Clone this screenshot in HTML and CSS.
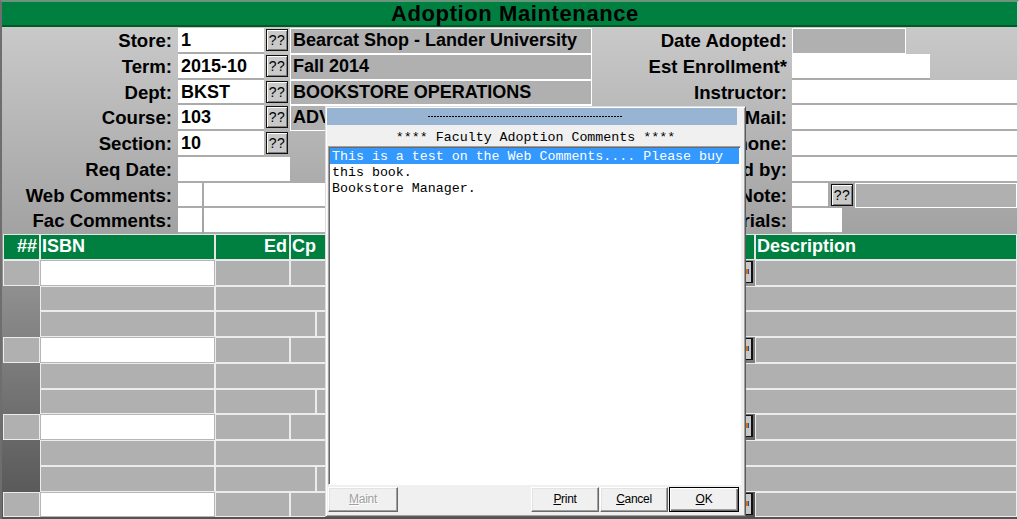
FILE: index.html
```html
<!DOCTYPE html>
<html>
<head>
<meta charset="utf-8">
<title>Adoption Maintenance</title>
<link rel="stylesheet" href="styles.css">
</head>
<body>
<div class="app">
  <div class="title">Adoption Maintenance</div>
  <div class="form">
    <div class="fcol left">
      <div class="frow"><span class="lbl">Store:</span><span class="inp w86">1</span><span class="qq">??</span><span class="desc">Bearcat Shop - Lander University</span></div>
      <div class="frow"><span class="lbl">Term:</span><span class="inp w86">2015-10</span><span class="qq">??</span><span class="desc">Fall 2014</span></div>
      <div class="frow"><span class="lbl">Dept:</span><span class="inp w86">BKST</span><span class="qq">??</span><span class="desc">BOOKSTORE OPERATIONS</span></div>
      <div class="frow"><span class="lbl">Course:</span><span class="inp w86">103</span><span class="qq">??</span><span class="desc">ADV</span></div>
      <div class="frow"><span class="lbl">Section:</span><span class="inp w86">10</span><span class="qq">??</span></div>
      <div class="frow"><span class="lbl">Req Date:</span><span class="inp w112"></span></div>
      <div class="frow"><span class="lbl">Web Comments:</span><span class="inp w24"></span><span class="inp wide"></span></div>
      <div class="frow"><span class="lbl">Fac Comments:</span><span class="inp w24"></span><span class="inp wide"></span></div>
    </div>
    <div class="fcol right">
      <div class="frow"><span class="lbl">Date Adopted:</span><span class="gfield w114"></span></div>
      <div class="frow"><span class="lbl">Est Enrollment*</span><span class="inp w138"></span></div>
      <div class="frow"><span class="lbl">Instructor:</span><span class="inp grow"></span></div>
      <div class="frow"><span class="lbl">Mail:</span><span class="inp grow"></span></div>
      <div class="frow"><span class="lbl">Phone:</span><span class="inp grow"></span></div>
      <div class="frow"><span class="lbl">Adopted by:</span><span class="inp grow"></span></div>
      <div class="frow"><span class="lbl">Note:</span><span class="inp w36"></span><span class="qq qq-note">??</span><span class="gfield grow"></span></div>
      <div class="frow"><span class="lbl">Materials:</span><span class="inp w50"></span></div>
    </div>
  </div>

  <div class="grid">
    <div class="h col1 right-t">##</div>
    <div class="h col2">ISBN</div>
    <div class="h col3 right-t">Ed</div>
    <div class="h col45">Cp</div>
    <div class="h col6"></div>
    <div class="h col7">Description</div>

    <div class="c col1"></div><div class="c w col2"></div><div class="c col3"></div><div class="c col45"></div><div class="col6 mini-cell"><span class="mini"></span></div><div class="c col7"></div>
    <div class="col1 dark"></div><div class="c col2"></div><div class="c col3to7"></div>
    <div class="c col2"></div><div class="c col34"></div><div class="c col5to7"></div>

    <div class="c col1"></div><div class="c w col2"></div><div class="c col3"></div><div class="c col45"></div><div class="col6 mini-cell"><span class="mini"></span></div><div class="c col7"></div>
    <div class="col1 dark"></div><div class="c col2"></div><div class="c col3to7"></div>
    <div class="c col2"></div><div class="c col34"></div><div class="c col5to7"></div>

    <div class="c col1"></div><div class="c w col2"></div><div class="c col3"></div><div class="c col45"></div><div class="col6 mini-cell"><span class="mini"></span></div><div class="c col7"></div>
    <div class="col1 dark"></div><div class="c col2"></div><div class="c col3to7"></div>
    <div class="c col2"></div><div class="c col34"></div><div class="c col5to7"></div>

    <div class="c col1"></div><div class="c w col2"></div><div class="c col3"></div><div class="c col45"></div><div class="col6 mini-cell"><span class="mini"></span></div><div class="c col7"></div>
  </div>

  <div class="modal">
    <div class="mhead"><div class="dots"></div></div>
    <div class="msub">**** Faculty Adoption Comments ****</div>
    <div class="mtext">
      <div class="ln sel">This is a test on the Web Comments.... Please buy</div>
      <div class="ln">this book.</div>
      <div class="ln">Bookstore Manager.</div>
    </div>
    <div class="mbtns">
      <span class="btn maint"><u>M</u>aint</span>
      <span class="spacer"></span>
      <span class="btn print"><u>P</u>rint</span>
      <span class="btn cancel"><u>C</u>ancel</span>
      <span class="btn ok"><u>O</u>K</span>
    </div>
  </div>
</div>
</body>
</html>
```

FILE: styles.css
```css
* { box-sizing: border-box; margin: 0; padding: 0; }
html, body { width: 1019px; height: 519px; overflow: hidden; }
body { font-family: "Liberation Sans", Arial, sans-serif; background: #c8c8c8; color: #000; }

.app {
  position: relative;
  width: 1019px;
  height: 519px;
  border-top: 2px solid #6a957c;
  border-left: 2px solid #6e6e6e;
  border-right: 2px solid #d2d2d2;
  overflow: hidden;
  display: flex;
  flex-direction: column;
}

.title {
  flex: none;
  height: 25px;
  background: #008040;
  border-bottom: 2px solid #005a22;
  text-align: center;
  padding-left: 11px;
  font-weight: bold;
  font-size: 22px;
  letter-spacing: 0.6px;
  line-height: 24px;
}

.form {
  flex: none;
  display: flex;
  padding-top: 1px;
  background: linear-gradient(#c9c9c9, #a2a2a2);
}
.fcol { display: flex; flex-direction: column; }
.left { width: 593px; }
.right { flex: 1; }
.frow { height: 25.75px; display: flex; align-items: stretch; }

.lbl {
  flex: none;
  font-weight: bold;
  font-size: 18.6px;
  line-height: 25.75px;
  text-align: right;
  white-space: nowrap;
}
.left .lbl { width: 170px; margin-right: 6px; }
.right .lbl { width: 192px; margin-right: 5px; }

.inp {
  flex: none;
  background: #fff;
  border-bottom: 2px solid #ababab;
  font-weight: bold;
  font-size: 18px;
  line-height: 24px;
  padding-left: 3px;
  white-space: nowrap;
}
.w86 { width: 86px; }
.w112 { width: 112px; }
.w24 { width: 24px; margin-right: 2px; }
.wide { width: 140px; }
.w138 { width: 138px; }
.w36 { width: 36px; }
.w50 { width: 50px; }
.grow { flex: 1; }

.qq {
  flex: none;
  width: 22px;
  height: 22px;
  margin: 1px 2px 0 2px;
  background: #c9c9c9;
  border: 1px solid #111;
  box-shadow: inset 1px 1px #fff, inset -1px -1px #808080;
  font-size: 14px;
  line-height: 20px;
  text-align: center;
  letter-spacing: 0.5px;
}
.qq-note { margin-left: 3px; }

.desc {
  flex: none;
  width: 302px;
  background: #b0b0b0;
  border: 1px solid #fff;
  font-weight: bold;
  font-size: 18px;
  line-height: 23.5px;
  padding-left: 2px;
  white-space: nowrap;
  overflow: hidden;
}

.gfield {
  background: #b0b0b0;
  border: 1px solid #fff;
}
.w114 { flex: none; width: 114px; }

/* table grid */
.grid {
  flex: 1;
  display: grid;
  grid-template-columns: 37px 175px 75px 26px 1fr 10px 262px;
  grid-auto-rows: 25.75px;
  padding-left: 1px;
  background: linear-gradient(#9d9d9d, #535353);
  overflow: hidden;
}
.h {
  background: #008040;
  color: #fff;
  font-weight: bold;
  font-size: 18px;
  line-height: 23.5px;
  border: 1px solid #e6e6e6;
  white-space: nowrap;
  overflow: hidden;
  padding-left: 1px;
}
.right-t { text-align: right; padding-right: 2px; }
.c { background: #b0b0b0; border: 1px solid #ececec; }
.c.w { background: #fff; border-color: #b6b6b6; }

.col1 { grid-column: 1; }
.col2 { grid-column: 2; }
.col3 { grid-column: 3; }
.col45 { grid-column: 4 / 6; }
.col6 { grid-column: 6; }
.col7 { grid-column: 7; }
.col3to7 { grid-column: 3 / 8; }
.col34 { grid-column: 3 / 5; }
.col5to7 { grid-column: 5 / 8; }
.dark { grid-row: span 2; }

.mini-cell { display: flex; align-items: flex-start; }
.mini {
  display: block;
  width: 8px;
  height: 22px;
  margin-top: 1px;
  background: #c8c8c8;
  border: 1px solid #111;
  border-right-width: 2px;
  position: relative;
}
.mini::before {
  content: "";
  position: absolute;
  left: 0;
  top: 7px;
  width: 2px;
  height: 5px;
  background: #d07020;
  box-shadow: 1px 0 #2050a0;
}

/* modal */
.modal {
  position: absolute;
  left: 323px;
  top: 104px;
  width: 421px;
  height: 411px;
  background: #f0f0f0;
  border: 1px solid;
  border-color: #dcdcdc #5c5c5c #5c5c5c #dcdcdc;
  box-shadow: inset 1px 1px #fff, inset -1px -1px #a0a0a0;
  padding: 1px;
  display: flex;
  flex-direction: column;
}
.mhead {
  flex: none;
  height: 17px;
  background: #98b4d3;
  margin-right: 7px;
}
.dots {
  width: 195px;
  height: 10px;
  margin-left: 101px;
  border-bottom: 1px solid transparent;
  background: repeating-linear-gradient(90deg, #000 0 2px, transparent 2px 3px) bottom / 100% 1px no-repeat;
}
.msub {
  flex: none;
  height: 20px;
  text-align: center;
  font-family: "Liberation Mono", "Courier New", monospace;
  font-size: 13.3px;
  line-height: 25px;
  white-space: pre;
  overflow: visible;
}
.mtext {
  flex: none;
  margin: 1px 0 0 1px;
  width: 413px;
  height: 339px;
  background: #fff;
  border: 1px solid;
  border-color: #a0a0a0 #fff #fff #a0a0a0;
  box-shadow: inset 1px 1px #696969;
  padding: 1px 1px 1px 1px;
}
.ln {
  font-family: "Liberation Mono", "Courier New", monospace;
  font-size: 13.3px;
  line-height: 16px;
  padding-left: 2px;
  padding-top: 1px;
  height: 16px;
  white-space: pre;
}
.sel { background: #3399ff; color: #fff; }

.mbtns {
  flex: none;
  display: flex;
  height: 25px;
  margin-top: 2px;
  padding: 0 5px 0 1px;
}
.spacer { flex: 1; }
.btn {
  flex: none;
  height: 25px;
  background: #f0f0f0;
  border: 1px solid;
  border-color: #fff #696969 #696969 #fff;
  box-shadow: inset -1px -1px #a0a0a0, inset 1px 1px #e3e3e3;
  font-family: "Liberation Sans", Arial, sans-serif;
  font-size: 12px;
  letter-spacing: -0.3px;
  line-height: 23px;
  text-align: center;
}
.maint { width: 70px; color: #a0a0a0; text-shadow: 1px 1px #fff; }
.print { width: 68px; margin-right: 1px; }
.cancel { width: 68px; margin-right: 1px; }
.ok {
  width: 70px;
  border: 1px solid #000;
  box-shadow: inset 1px 1px #fff, inset -1px -1px #696969, inset -2px -2px #a0a0a0;
}
```
